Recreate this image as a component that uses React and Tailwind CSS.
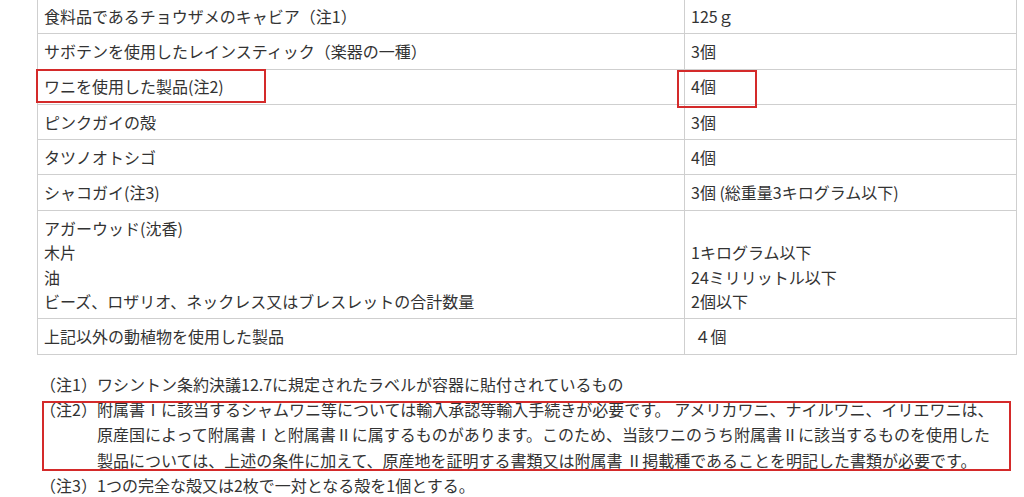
const rows = [
  { name: ['食料品であるチョウザメのキャビア（注1）'], amount: ['125ｇ'] },
  { name: ['サボテンを使用したレインスティック（楽器の一種）'], amount: ['3個'] },
  { name: ['ワニを使用した製品(注2)'], amount: ['4個'] },
  { name: ['ピンクガイの殻'], amount: ['3個'] },
  { name: ['タツノオトシゴ'], amount: ['4個'] },
  { name: ['シャコガイ(注3)'], amount: ['3個 (総重量3キログラム以下)'] },
  {
    name: ['アガーウッド(沈香)', '木片', '油', 'ビーズ、ロザリオ、ネックレス又はブレスレットの合計数量'],
    amount: ['\u00a0', '1キログラム以下', '24ミリリットル以下', '2個以下'],
  },
  { name: ['上記以外の動植物を使用した製品'], amount: ['\u00a0４個'] },
];

const Cell = ({ lines, className = '' }) => (
  <td className={`border border-[#cfcfcf] px-[6px] py-[4.9px] align-middle ${className}`}>
    {lines.map((l, i) => (
      <div key={i} className="leading-[24.5px] whitespace-nowrap">{l}</div>
    ))}
  </td>
);

export default function App() {
  return (
    <div
      className="relative w-[1024px] h-[497px] overflow-hidden bg-white text-[16px] text-[#333]"
      style={{ fontFamily: '"Noto Sans CJK JP", "Noto Sans", sans-serif' }}
    >
      <div className="pl-[37px] -mt-[2px]">
        <table className="w-[980px] border-collapse table-fixed">
          <colgroup>
            <col className="w-[647px]" />
            <col />
          </colgroup>
          <tbody>
            {rows.map((r, i) => (
              <tr key={i}>
                <Cell lines={r.name} />
                <Cell lines={r.amount} />
              </tr>
            ))}
          </tbody>
        </table>

        {/* notes */}
        <div className="mt-[17px] pl-[3px] leading-[25.3px]">
          <div className="flex">
            <span className="w-[57px] shrink-0">（注1）</span>
            <span className="whitespace-nowrap">ワシントン条約決議12.7に規定されたラベルが容器に貼付されているもの</span>
          </div>
          <div className="flex">
            <span className="w-[57px] shrink-0">（注2）</span>
            <span className="whitespace-nowrap">
              附属書Ⅰに該当するシャムワニ等については輸入承認等輸入手続きが必要です。 アメリカワニ、ナイルワニ、イリエワニは、
              <br />
              原産国によって附属書Ⅰと附属書Ⅱに属するものがあります。このため、当該ワニのうち附属書Ⅱに該当するものを使用した
              <br />
              製品については、上述の条件に加えて、原産地を証明する書類又は附属書 Ⅱ掲載種であることを明記した書類が必要です。
            </span>
          </div>
          <div className="flex">
            <span className="w-[57px] shrink-0">（注3）</span>
            <span className="whitespace-nowrap">1つの完全な殻又は2枚で一対となる殻を1個とする。</span>
          </div>
        </div>
      </div>

      {/* red annotation boxes */}
      <div className="absolute left-[36px] top-[69px] w-[230px] h-[34px] border-2 border-[#d42a2a]" />
      <div className="absolute left-[677px] top-[70px] w-[80px] h-[38px] border-2 border-[#d42a2a]" />
      <div className="absolute left-[42px] top-[401px] w-[969px] h-[70px] border-2 border-[#d42a2a]" />
    </div>
  );
}
